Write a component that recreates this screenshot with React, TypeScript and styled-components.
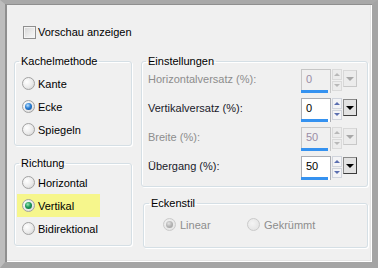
import React from "react";
import styled, { createGlobalStyle, css } from "styled-components";

const GlobalStyle = createGlobalStyle`
  html, body {
    margin: 0;
    padding: 0;
    background: #f0f0f0;
  }
  body {
    font-family: "Liberation Sans", Arial, sans-serif;
    font-size: 11px;
    color: #000;
  }
`;

// outer dialog frame
const Frame = styled.div`
  box-sizing: border-box;
  width: 378px;
  height: 268px;
  display: flex;
  flex-direction: column;
  background: #f0f0f0;
  border-style: solid;
  border-width: 4px 6px 6px 5px;
  border-color: #a9a9a9 #a4a4a4 #a4a4a4 #bdbdbd;
  box-shadow: inset 2px 1px 0 #8f8f8f, inset -1px -1px 0 #ffffff,
    inset -2px -2px 0 #e4e4e4;
  padding: 22px 4px 0 9px;
`;

const CheckRow = styled.label`
  display: flex;
  align-items: center;
  gap: 2px;
  margin-left: 9px;
  height: 13px;
  line-height: 13px;
`;

const CheckBox = styled.span`
  box-sizing: border-box;
  width: 13px;
  height: 13px;
  border: 1px solid #8f8f8f;
  background: linear-gradient(135deg, #d4d4d4 0%, #ececec 60%, #f8f8f8 100%);
  box-shadow: inset 0 0 0 1px #f4f4f4;
`;

const Columns = styled.div`
  display: flex;
  gap: 9px;
  margin-top: 15px;
`;

const Column = styled.div<{ $width?: number }>`
  display: flex;
  flex-direction: column;
  ${({ $width }) =>
    $width
      ? css`
          width: ${$width}px;
        `
      : css`
          flex: 1;
        `}
`;

const Group = styled.fieldset<{ $gap?: number; $indent?: number }>`
  margin: ${({ $gap }) => $gap ?? 0}px 0 0 ${({ $indent }) => $indent ?? 0}px;
  padding: 0;
  border: 1px solid #d5dfe5;
  border-radius: 3px;
  box-shadow: inset 1px 1px 0 #ffffff, 1px 1px 0 #ffffff;
  min-width: 0;
`;

const Legend = styled.legend<{ $offset?: number }>`
  margin-left: ${({ $offset }) => $offset ?? 4}px;
  padding: 0 2px;
  line-height: 14px;
  color: #000;
`;

const GroupBody = styled.div<{ $pad: string }>`
  display: flex;
  flex-direction: column;
  padding: ${({ $pad }) => $pad};
`;

const OptionRow = styled.div<{ $marked?: boolean }>`
  display: flex;
  align-items: center;
  gap: 3px;
  height: 23px;
  min-width: 83px;
  width: fit-content;
  box-sizing: border-box;
  padding-left: 5px;
  background: ${({ $marked }) => ($marked ? "#f6f68c" : "transparent")};
`;

const RadioDot = styled.span<{ $checked?: boolean; $tone?: "blue" | "green" | "gray"; $disabled?: boolean }>`
  box-sizing: border-box;
  width: 13px;
  height: 13px;
  border-radius: 50%;
  flex: none;
  border: 1px solid ${({ $disabled }) => ($disabled ? "#cacaca" : "#a2a2a2")};
  background: ${({ $disabled }) =>
    $disabled
      ? "radial-gradient(circle at 40% 40%, #f4f4f4 0%, #e6e6e6 70%, #dcdcdc 100%)"
      : "radial-gradient(circle at 35% 35%, #ffffff 0%, #eaeaea 55%, #cdcdcd 100%)"};
  position: relative;
  ${({ $checked, $tone }) =>
    $checked &&
    css`
      &::after {
        content: "";
        position: absolute;
        left: 2px;
        top: 2px;
        width: 7px;
        height: 7px;
        border-radius: 50%;
        background: ${$tone === "green"
          ? "radial-gradient(circle at 40% 35%, #9ee6b8 0%, #1c9a5a 45%, #0c5a32 100%)"
          : $tone === "gray"
          ? "radial-gradient(circle at 40% 35%, #e4e4e4 0%, #b4b4b4 50%, #9a9a9a 100%)"
          : "radial-gradient(circle at 40% 35%, #bfe3ff 0%, #2a7fd4 45%, #0b3f86 100%)"};
      }
    `}
`;

const OptionText = styled.span<{ $disabled?: boolean }>`
  color: ${({ $disabled }) => ($disabled ? "#8d8d8d" : "#000")};
  white-space: nowrap;
`;

const ValueRow = styled.div`
  display: flex;
  justify-content: space-between;
  align-items: flex-start;
  height: 29px;
`;

const ValueLabel = styled.span<{ $disabled?: boolean }>`
  line-height: 20px;
  color: ${({ $disabled }) => ($disabled ? "#8d8d8d" : "#1a1a2a")};
`;

const Spin = styled.div`
  display: flex;
  align-items: flex-start;
  gap: 1px;
`;

const Field = styled.div<{ $disabled?: boolean }>`
  box-sizing: border-box;
  width: 30px;
  height: 24px;
  display: flex;
  flex-direction: column;
  border: 1px solid ${({ $disabled }) => ($disabled ? "#c6c6c6" : "#abadb3")};
  border-bottom: none;
  background: ${({ $disabled }) => ($disabled ? "#f0f0f0" : "#ffffff")};
`;

const FieldValue = styled.span<{ $disabled?: boolean }>`
  flex: 1;
  padding-left: 4px;
  line-height: 19px;
  color: ${({ $disabled }) => ($disabled ? "#9a8ca6" : "#000")};
`;

const FieldBar = styled.span`
  height: 3px;
  margin: 0 2px 0 -1px;
  background: #3592f0;
`;

const Arrows = styled.div<{ $disabled?: boolean }>`
  box-sizing: border-box;
  width: 10px;
  height: 22px;
  display: flex;
  flex-direction: column;
  gap: 1px;
  & > span {
    flex: 1;
    display: flex;
    align-items: center;
    justify-content: center;
    border: 1px solid ${({ $disabled }) => ($disabled ? "#dadada" : "#d0d4dc")};
    background: ${({ $disabled }) => ($disabled ? "#ececec" : "#f4f4f6")};
  }
`;

const Tri = styled.i<{ $dir: "up" | "down"; $color: string; $size?: number }>`
  width: 0;
  height: 0;
  border-left: ${({ $size }) => $size ?? 3}px solid transparent;
  border-right: ${({ $size }) => $size ?? 3}px solid transparent;
  ${({ $dir, $color, $size }) =>
    $dir === "up"
      ? css`
          border-bottom: ${Math.ceil(($size ?? 3) * 0.9)}px solid ${$color};
        `
      : css`
          border-top: ${Math.ceil(($size ?? 3) * 0.9)}px solid ${$color};
        `}
`;

const DropButton = styled.div<{ $disabled?: boolean }>`
  box-sizing: border-box;
  width: 14px;
  height: 17px;
  margin-top: 1px;
  display: flex;
  align-items: center;
  justify-content: center;
  background: ${({ $disabled }) => ($disabled ? "#ececec" : "#e2e2e2")};
  border: 1px solid;
  border-color: ${({ $disabled }) =>
    $disabled ? "#d8d8d8 #c8c8c8 #c8c8c8 #d8d8d8" : "#8a8a8a #3c3c3c #3c3c3c #8a8a8a"};
`;

const InlineOptions = styled.div`
  display: grid;
  grid-template-columns: 84px auto;
  height: 15px;
  align-items: center;
`;

const InlineOption = styled.div`
  display: flex;
  align-items: center;
  gap: 4px;
`;

type SpinProps = { value: string; disabled?: boolean };

const SpinBox = ({ value, disabled }: SpinProps) => (
  <Spin>
    <Field $disabled={disabled}>
      <FieldValue $disabled={disabled}>{value}</FieldValue>
      <FieldBar />
    </Field>
    <Arrows $disabled={disabled}>
      <span>
        <Tri $dir="up" $color={disabled ? "#b8b8b8" : "#5b6fb0"} />
      </span>
      <span>
        <Tri $dir="down" $color={disabled ? "#b8b8b8" : "#5b6fb0"} />
      </span>
    </Arrows>
    <DropButton $disabled={disabled}>
      <Tri $dir="down" $color={disabled ? "#a8a8a8" : "#000"} $size={4} />
    </DropButton>
  </Spin>
);

type Option = { label: string; checked?: boolean; marked?: boolean };

const tiling: Option[] = [{ label: "Kante" }, { label: "Ecke", checked: true }, { label: "Spiegeln" }];
const direction: Option[] = [
  { label: "Horizontal" },
  { label: "Vertikal", checked: true, marked: true },
  { label: "Bidirektional" },
];

const values = [
  { label: "Horizontalversatz (%):", value: "0", disabled: true },
  { label: "Vertikalversatz (%):", value: "0" },
  { label: "Breite (%):", value: "50", disabled: true },
  { label: "Übergang (%):", value: "50" },
];

export default function App() {
  return (
    <>
      <GlobalStyle />
      <Frame>
        <CheckRow>
          <CheckBox />
          <span>Vorschau anzeigen</span>
        </CheckRow>
        <Columns>
          <Column $width={118}>
            <Group>
              <Legend>Kachelmethode</Legend>
              <GroupBody $pad="4px 0 4px 2px">
                {tiling.map((o) => (
                  <OptionRow key={o.label}>
                    <RadioDot $checked={o.checked} $tone="blue" />
                    <OptionText>{o.label}</OptionText>
                  </OptionRow>
                ))}
              </GroupBody>
            </Group>
            <Group $gap={10}>
              <Legend>Richtung</Legend>
              <GroupBody $pad="1px 0 5px 2px">
                {direction.map((o) => (
                  <OptionRow key={o.label} $marked={o.marked}>
                    <RadioDot $checked={o.checked} $tone="green" />
                    <OptionText>{o.label}</OptionText>
                  </OptionRow>
                ))}
              </GroupBody>
            </Group>
          </Column>
          <Column>
            <Group>
              <Legend>Einstellungen</Legend>
              <GroupBody $pad="1px 10px 1px 6px">
                {values.map((v) => (
                  <ValueRow key={v.label}>
                    <ValueLabel $disabled={v.disabled}>{v.label}</ValueLabel>
                    <SpinBox value={v.value} disabled={v.disabled} />
                  </ValueRow>
                ))}
              </GroupBody>
            </Group>
            <Group $gap={9} $indent={2}>
              <Legend $offset={5}>Eckenstil</Legend>
              <GroupBody $pad="7px 0 15px 19px">
                <InlineOptions>
                  <InlineOption>
                    <RadioDot $checked $tone="gray" $disabled />
                    <OptionText $disabled>Linear</OptionText>
                  </InlineOption>
                  <InlineOption>
                    <RadioDot $disabled />
                    <OptionText $disabled>Gekrümmt</OptionText>
                  </InlineOption>
                </InlineOptions>
              </GroupBody>
            </Group>
          </Column>
        </Columns>
      </Frame>
    </>
  );
}
